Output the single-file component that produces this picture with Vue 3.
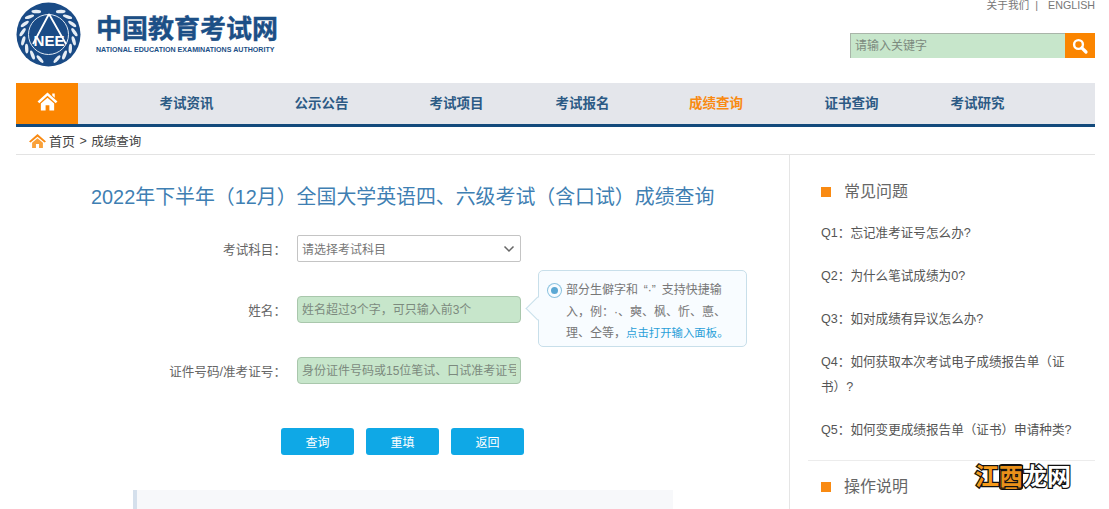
<template>
  <div class="page">
    <header class="top">
      <div class="brand">
        <svg class="emblem" width="65" height="65" viewBox="0 0 65 65">
          <circle cx="32.5" cy="32.5" r="32" fill="#1a4b86" />
          <circle cx="32.5" cy="32.5" r="20" fill="none" stroke="#dfe8f2" stroke-width="1" />
          <g fill="#e6edf5">
            <ellipse v-for="leaf in leaves" :key="leaf.id" :cx="leaf.x" :cy="leaf.y" rx="4.8" ry="1.7" :transform="leaf.rotate" />
          </g>
          <path d="M33 12 L17 42 M33 12 L50 42" fill="none" stroke="#fff" stroke-width="1.8" />
          <text x="33" y="43.5" text-anchor="middle" textLength="31" lengthAdjust="spacingAndGlyphs" class="emblem-text">NEE</text>
        </svg>
        <div class="brand-text">
          <div class="brand-cn">中国教育考试网</div>
          <div class="brand-en">NATIONAL EDUCATION EXAMINATIONS AUTHORITY</div>
        </div>
      </div>
      <div class="top-right">
        <div class="top-links">关于我们<span class="sep">|</span>ENGLISH</div>
        <div class="search">
          <input class="search-input" placeholder="请输入关键字" />
          <button class="search-btn" type="button">
            <svg width="18" height="18" viewBox="0 0 18 18" fill="none" stroke="#fff">
              <circle cx="7.5" cy="7.5" r="4.4" stroke-width="2.4" />
              <path d="M10.8 10.8 L15 15" stroke-width="3.2" stroke-linecap="round" />
            </svg>
          </button>
        </div>
      </div>
    </header>

    <nav class="nav">
      <div class="nav-home">
        <svg width="21" height="19" viewBox="0 0 22 20" fill="#fff">
          <path d="M11 0.5 L21.5 10 L19.6 11.8 L11 4 L2.4 11.8 L0.5 10 Z" />
          <path d="M16 1.5 H18.6 V6 L16 3.8 Z" />
          <path d="M4 12.2 L11 6 L18 12.2 V19.5 H13 V14 H9 V19.5 H4 Z" />
        </svg>
      </div>
      <div class="nav-items">
        <a v-for="item in navItems" :key="item" class="nav-item" :class="{ active: item === '成绩查询' }">{{ item }}</a>
      </div>
    </nav>

    <div class="crumb">
      <svg width="17" height="14" viewBox="0 0 22 18">
        <path d="M11 0 L22 9.5 L20 11 L11 3.6 L2 11 L0 9.5 Z" fill="#f98a12" />
        <path d="M4 11.2 L11 5.4 L18 11.2 V18 H13 V13 H9 V18 H4 Z" fill="#f9a13a" />
      </svg>
      <span class="crumb-home">首页</span>
      <span class="crumb-rest">&gt;</span>
      <span class="crumb-rest">成绩查询</span>
    </div>

    <main class="main">
      <section class="content">
        <h1 class="title">2022年下半年（12月）全国大学英语四、六级考试（含口试）成绩查询</h1>

        <form class="form" @submit.prevent>
          <div class="row">
            <label class="label">考试科目：</label>
            <div class="select">
              <span>请选择考试科目</span>
              <svg width="12" height="8" viewBox="0 0 12 8" fill="none" stroke="#666" stroke-width="1.5">
                <path d="M1.5 1.5 L6 6 L10.5 1.5" />
              </svg>
            </div>
          </div>
          <div class="row">
            <label class="label">姓名：</label>
            <input class="field" placeholder="姓名超过3个字，可只输入前3个" />
            <div class="tip">
              <span class="tip-dot"></span>
              <p class="tip-text">部分生僻字和 “·” 支持快捷输入，例：·、奭、枫、忻、悳、理、仝等，<a class="tip-link">点击打开输入面板。</a></p>
            </div>
          </div>
          <div class="row">
            <label class="label">证件号码/准考证号：</label>
            <input class="field" placeholder="身份证件号码或15位笔试、口试准考证号" />
          </div>
          <div class="actions">
            <button class="btn" type="button">查询</button>
            <button class="btn" type="button">重填</button>
            <button class="btn" type="button">返回</button>
          </div>
        </form>

        <div class="notice"></div>
      </section>

      <aside class="side">
        <div class="side-block">
          <h3 class="side-title">常见问题</h3>
          <p v-for="q in questions" :key="q" class="question">{{ q }}</p>
        </div>
        <div class="side-block second">
          <h3 class="side-title">操作说明</h3>
        </div>
      </aside>
    </main>

    <div class="stamp"><span class="stamp-orange">江</span><span class="stamp-box">西</span><span>龙</span><span>网</span></div>
  </div>
</template>

<script setup>
const navItems = ['考试资讯', '公示公告', '考试项目', '考试报名', '成绩查询', '证书查询', '考试研究']

const questions = [
  'Q1：忘记准考证号怎么办?',
  'Q2：为什么笔试成绩为0?',
  'Q3：如对成绩有异议怎么办?',
  'Q4：如何获取本次考试电子成绩报告单（证书）?',
  'Q5：如何变更成绩报告单（证书）申请种类?',
]

// laurel leaves going round the ring, both sides
const leaves = []
for (let i = 0; i < 8; i++) {
  const right = (-62 + i * 19) * (Math.PI / 180)
  const left = Math.PI - right
  for (const [side, a] of [['r', right], ['l', left]]) {
    const x = 32.5 + 26 * Math.cos(a)
    const y = 32.5 + 26 * Math.sin(a)
    const deg = (a * 180) / Math.PI + (side === 'r' ? 60 : -60)
    leaves.push({ id: side + i, x, y, rotate: `rotate(${deg} ${x} ${y})` })
  }
}
</script>

<style>
html,
body {
  margin: 0;
  height: 509px;
  overflow: hidden;
  background: #fff;
}
</style>

<style scoped>
.page {
  position: relative;
  width: 1079px;
  height: 509px;
  margin-left: 16px;
  overflow: hidden;
  font-family: "Liberation Sans", "Noto Sans CJK SC", sans-serif;
  text-spacing-trim: space-all;
  color: #555;
}

.top {
  display: flex;
  justify-content: space-between;
  height: 83px;
}

.brand {
  display: flex;
  align-items: flex-start;
  padding-top: 2px;
}

.emblem-text {
  font-size: 14px;
  font-weight: 700;
  fill: #fff;
  font-family: "Liberation Sans", sans-serif;
}

.brand-text {
  margin: 11px 0 0 15px;
  color: #1c4f86;
}

.brand-cn {
  font-size: 26px;
  line-height: 32px;
  font-weight: 700;
  width: 182px;
  white-space: nowrap;
  -webkit-text-stroke: 0.4px #1c4f86;
}

.brand-en {
  margin-top: 1px;
  font-size: 7.1px;
  line-height: 8px;
  font-weight: 700;
  white-space: nowrap;
}

.top-right {
  display: flex;
  flex-direction: column;
  align-items: flex-end;
}

.top-links {
  margin-top: -2px;
  font-size: 10.7px;
  line-height: 14px;
  color: #777;
}

.sep {
  margin: 0 10px 0 6px;
}

.search {
  display: flex;
  margin-top: 21px;
  height: 25px;
}

.search-input {
  width: 215px;
  height: 25px;
  box-sizing: border-box;
  padding: 0 4px;
  border: 0;
  border-top: 1px solid #a9b5a9;
  border-left: 1px solid #a9b5a9;
  outline: none;
  background: #c7e6cb;
  font: 12px "Liberation Sans", "Noto Sans CJK SC", sans-serif;
}

.search-input::placeholder,
.field::placeholder {
  color: #7c8a7e;
  opacity: 1;
}

.search-btn {
  display: flex;
  align-items: center;
  justify-content: center;
  width: 30px;
  height: 25px;
  padding: 0;
  border: 0;
  background: #fb8500;
}

.nav {
  display: flex;
  height: 41px;
  background: #e4e6eb;
  border-bottom: 3px solid #134a7c;
}

.nav-home {
  display: flex;
  align-items: flex-start;
  justify-content: center;
  width: 62px;
  padding-top: 9px;
  box-sizing: border-box;
  background: #fb8500;
}

.nav-items {
  display: grid;
  grid-template-columns: 135px 135px 135px 117px 150px 121px 131px;
  padding-left: 41px;
}

.nav-item {
  font-size: 13.5px;
  font-weight: 700;
  line-height: 42px;
  text-align: center;
  color: #2c5a85;
}

.nav-item.active {
  color: #f98a12;
}

.crumb {
  display: flex;
  align-items: center;
  height: 27px;
  padding-left: 13px;
  border-bottom: 1px solid #e3e3e3;
  color: #444;
}

.crumb-home {
  margin-left: 3px;
  font-size: 13px;
}

.crumb-rest {
  margin-left: 4.5px;
  font-size: 12.5px;
}

.main {
  display: flex;
  height: 354px;
}

.content {
  width: 773px;
  border-right: 1px solid #e5e5e5;
}

.title {
  margin: 27px 0 0 75px;
  font-size: 19.9px;
  line-height: 30px;
  font-weight: 400;
  white-space: nowrap;
  color: #3f7fb3;
}

.form {
  position: relative;
  margin-top: 23px;
}

.row {
  display: flex;
  align-items: center;
  height: 27px;
  margin-bottom: 34px;
}

.label {
  width: 281px;
  padding-right: 11px;
  box-sizing: border-box;
  font-size: 12.6px;
  text-align: right;
  color: #666;
  white-space: nowrap;
}

.select {
  display: flex;
  align-items: center;
  justify-content: space-between;
  width: 224px;
  height: 27px;
  box-sizing: border-box;
  padding: 0 5px 0 4px;
  border: 1px solid #c4c4c4;
  border-radius: 2px;
  font-size: 12px;
  color: #777;
}

.field {
  width: 224px;
  height: 27px;
  box-sizing: border-box;
  padding: 0 4px;
  border: 1px solid #a9c7ac;
  border-radius: 4px;
  outline: none;
  background: #c7e6cb;
  font: 12px "Liberation Sans", "Noto Sans CJK SC", sans-serif;
  text-spacing-trim: space-all;
}

.tip {
  position: absolute;
  top: 35px;
  left: 522px;
  display: flex;
  width: 209px;
  height: 77px;
  box-sizing: border-box;
  padding: 9px 10px 0 9px;
  border: 1px solid #c8dfea;
  border-radius: 5px;
  background: #f8fcff;
}

.tip::before {
  content: "";
  position: absolute;
  left: -10px;
  top: 29px;
  width: 17px;
  height: 17px;
  box-sizing: border-box;
  background: #f8fcff;
  border-left: 1px solid #c8dfea;
  border-bottom: 1px solid #c8dfea;
  transform: rotate(45deg);
}

.tip-dot {
  flex: none;
  width: 7px;
  height: 7px;
  margin: 4px 5px 0 0;
  border: 3px solid #f8fcff;
  border-radius: 50%;
  background: #5ba8d4;
  box-shadow: 0 0 0 1px #8cc3e0;
}

.tip-text {
  margin: 0;
  font-size: 12px;
  line-height: 21.5px;
  word-spacing: 2.5px;
  color: #777;
}

.tip-link {
  font-size: 11.4px;
  color: #2a9fd8;
}

.actions {
  display: flex;
  gap: 12px;
  margin: 44px 0 0 265px;
}

.btn {
  width: 73px;
  height: 27px;
  padding: 0;
  border: 0;
  border-radius: 3px;
  background: #0fa8e6;
  color: #fff;
  font: 12px "Liberation Sans", "Noto Sans CJK SC", sans-serif;
}

.notice {
  width: 536px;
  height: 40px;
  margin: 35px 0 0 117px;
  border-left: 4px solid #d5e0ec;
  background: #f7f8fa;
}

.side {
  flex: 1;
}

.side-block {
  padding: 26px 20px 0 31px;
}

.side-block.second {
  margin: -1px 0 0 18px;
  padding: 15px 0 0 13px;
  border-top: 1px solid #ececec;
}

.side-title {
  display: flex;
  align-items: center;
  margin: 0 0 18px;
  font-size: 16px;
  line-height: 22px;
  font-weight: 400;
  color: #666;
}

.side-title::before {
  content: "";
  width: 10px;
  height: 10px;
  margin-right: 13px;
  background: #f98a12;
}

.question {
  margin: 0 0 18px;
  font-size: 12.6px;
  line-height: 25px;
  color: #555;
}

.stamp {
  position: absolute;
  left: 959px;
  top: 464px;
  display: flex;
  font-size: 24px;
  line-height: 26px;
  font-weight: 700;
  color: #fff;
  -webkit-text-stroke: 2.5px #111;
  paint-order: stroke fill;
}

.stamp-orange {
  color: #f59a1b;
}

.stamp-box {
  background: #e8901a;
  color: #e8901a;
  outline: 1px solid #111;
  outline-offset: -1px;
  border-radius: 3px;
}
</style>
